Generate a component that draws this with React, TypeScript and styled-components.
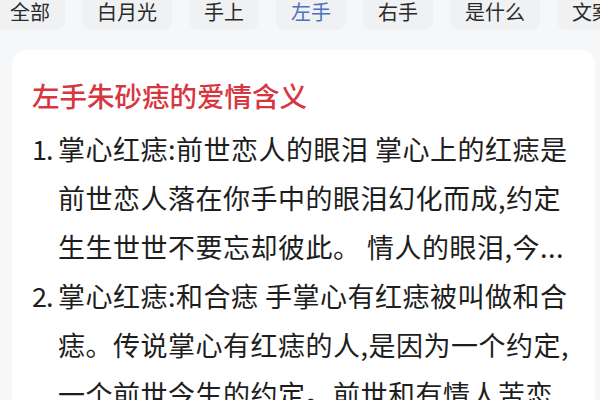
import * as React from 'react';
import styled, { createGlobalStyle } from 'styled-components';

const GlobalStyle = createGlobalStyle`
  html, body {
    margin: 0;
    padding: 0;
    background: #f6f7f9;
    overflow: hidden;
  }
  body {
    font-family: "Noto Sans CJK SC", "Noto Sans", sans-serif;
  }
`;

const tabs = ['全部', '白月光', '手上', '左手', '右手', '是什么', '文案'];

const items = [
  {
    no: '1.',
    lines: [
      '掌心红痣:前世恋人的眼泪 掌心上的红痣是',
      '前世恋人落在你手中的眼泪幻化而成,约定',
      '生生世世不要忘却彼此。 情人的眼泪,今...',
    ],
  },
  {
    no: '2.',
    lines: [
      '掌心红痣:和合痣 手掌心有红痣被叫做和合',
      '痣。传说掌心有红痣的人,是因为一个约定,',
      '一个前世今生的约定。前世和有情人苦恋...',
    ],
  },
];

const Page = styled.div`
  width: 600px;
  height: 400px;
  overflow: hidden;
  display: flex;
  flex-direction: column;
`;

const TabBar = styled.div`
  display: flex;
  gap: 17px;
  margin-top: -8px;
  margin-left: -5px;
  white-space: nowrap;
`;

const Tab = styled.div<{ $active?: boolean }>`
  flex-shrink: 0;
  height: 38px;
  padding: 0 15px;
  display: flex;
  align-items: center;
  border-radius: 9px;
  background: #f0f1f3;
  font-size: 20px;
  color: ${(p) => (p.$active ? '#4a71c2' : '#2a2a2a')};
`;

const Card = styled.div`
  margin: 20px 5px 0 12px;
  flex: 1;
  background: #ffffff;
  border-radius: 14px 14px 0 0;
  padding: 27px 0 0 20px;
`;

const Title = styled.div`
  font-size: 27.5px;
  font-weight: 500;
  line-height: 36px;
  color: #d8363f;
  margin-bottom: 11px;
`;

const Item = styled.div`
  display: grid;
  grid-template-columns: 26px 1fr;
  font-size: 27px;
  line-height: 49px;
  color: #1e1e1e;
`;

const Marker = styled.div`
  letter-spacing: -1px;
`;

const Line = styled.div`
  white-space: nowrap;
  letter-spacing: 0.5px;
`;

export default function App() {
  return (
    <>
      <GlobalStyle />
      <Page>
        <TabBar>
          {tabs.map((t) => (
            <Tab key={t} $active={t === '左手'}>
              {t}
            </Tab>
          ))}
        </TabBar>
        <Card>
          <Title>左手朱砂痣的爱情含义</Title>
          {items.map((it) => (
            <Item key={it.no}>
              <Marker>{it.no}</Marker>
              <div>
                {it.lines.map((l) => (
                  <Line key={l}>{l}</Line>
                ))}
              </div>
            </Item>
          ))}
        </Card>
      </Page>
    </>
  );
}
